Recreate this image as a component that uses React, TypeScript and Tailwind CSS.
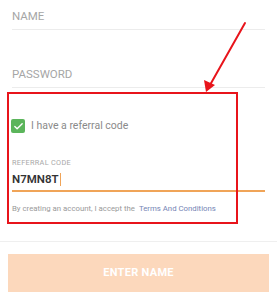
import { Check } from "lucide-react";

const App = () => {
  return (
    <div className="relative h-[300px] w-[277px] overflow-hidden bg-white font-['Roboto',sans-serif]">
      <div className="px-3">
        {/* Name */}
        <div className="h-[30px] border-b border-[#ececec] pt-[10px] text-[11.5px] leading-[13px] text-[#a6a6a6]">
          NAME
        </div>

        {/* Password */}
        <div className="h-[58px] border-b border-[#ececec] pt-[38px] text-[11.5px] leading-[13px] text-[#a6a6a6]">
          PASSWORD
        </div>

        {/* Referral checkbox */}
        <div className="mt-[31px] flex items-center gap-[6px]">
          <div className="ml-[-1px] flex h-[14px] w-[14px] items-center justify-center rounded-[2px] bg-[#5bb55b]">
            <Check className="h-[11px] w-[11px] text-white" strokeWidth={3} />
          </div>
          <span className="text-[10.5px] leading-[14px] text-[#8a8a8a]">I have a referral code</span>
        </div>

        {/* Referral code field */}
        <div className="mt-[26px] text-[7.3px] leading-[8px] tracking-[0.3px] text-[#a8a8a8]">REFERRAL CODE</div>
        <div className="mt-[3px] flex h-[22px] items-center border-b-2 border-[#f0a458] pb-[2px]">
          <span className="text-[11.5px] font-semibold leading-[14px] text-[#333]">N7MN8T</span>
          <span className="ml-[1px] h-[13px] w-[1.5px] bg-[#f0a458]" />
        </div>

        <div className="mt-[12px] text-[7.8px] leading-[9px] text-[#9a9a9a]">
          By creating an account, I accept the{" "}
          <span className="ml-[2px] text-[#7585b5]">Terms And Conditions</span>
        </div>
      </div>

      {/* Divider */}
      <div className="mt-[28px] border-b border-[#efefef]" />

      {/* Button */}
      <div className="px-2 pt-[12px]">
        <button className="flex h-[38px] w-full items-center justify-center bg-[#fcd8bc] text-[11px] font-bold tracking-[0.3px] text-white">
          ENTER NAME
        </button>
      </div>

      {/* Annotation box */}
      <div className="absolute left-[7px] top-[92px] h-[132px] w-[231px] border-2 border-[#e8141b]" />

      {/* Annotation arrow */}
      <svg className="absolute left-0 top-0" width="277" height="300" viewBox="0 0 277 300">
        <line x1="245" y1="23" x2="210" y2="85" stroke="#e8141b" strokeWidth="2" strokeLinecap="round" />
        <path d="M206 92 L204 80 L215 85 Z" fill="#e8141b" />
      </svg>
    </div>
  );
};

export default App;
